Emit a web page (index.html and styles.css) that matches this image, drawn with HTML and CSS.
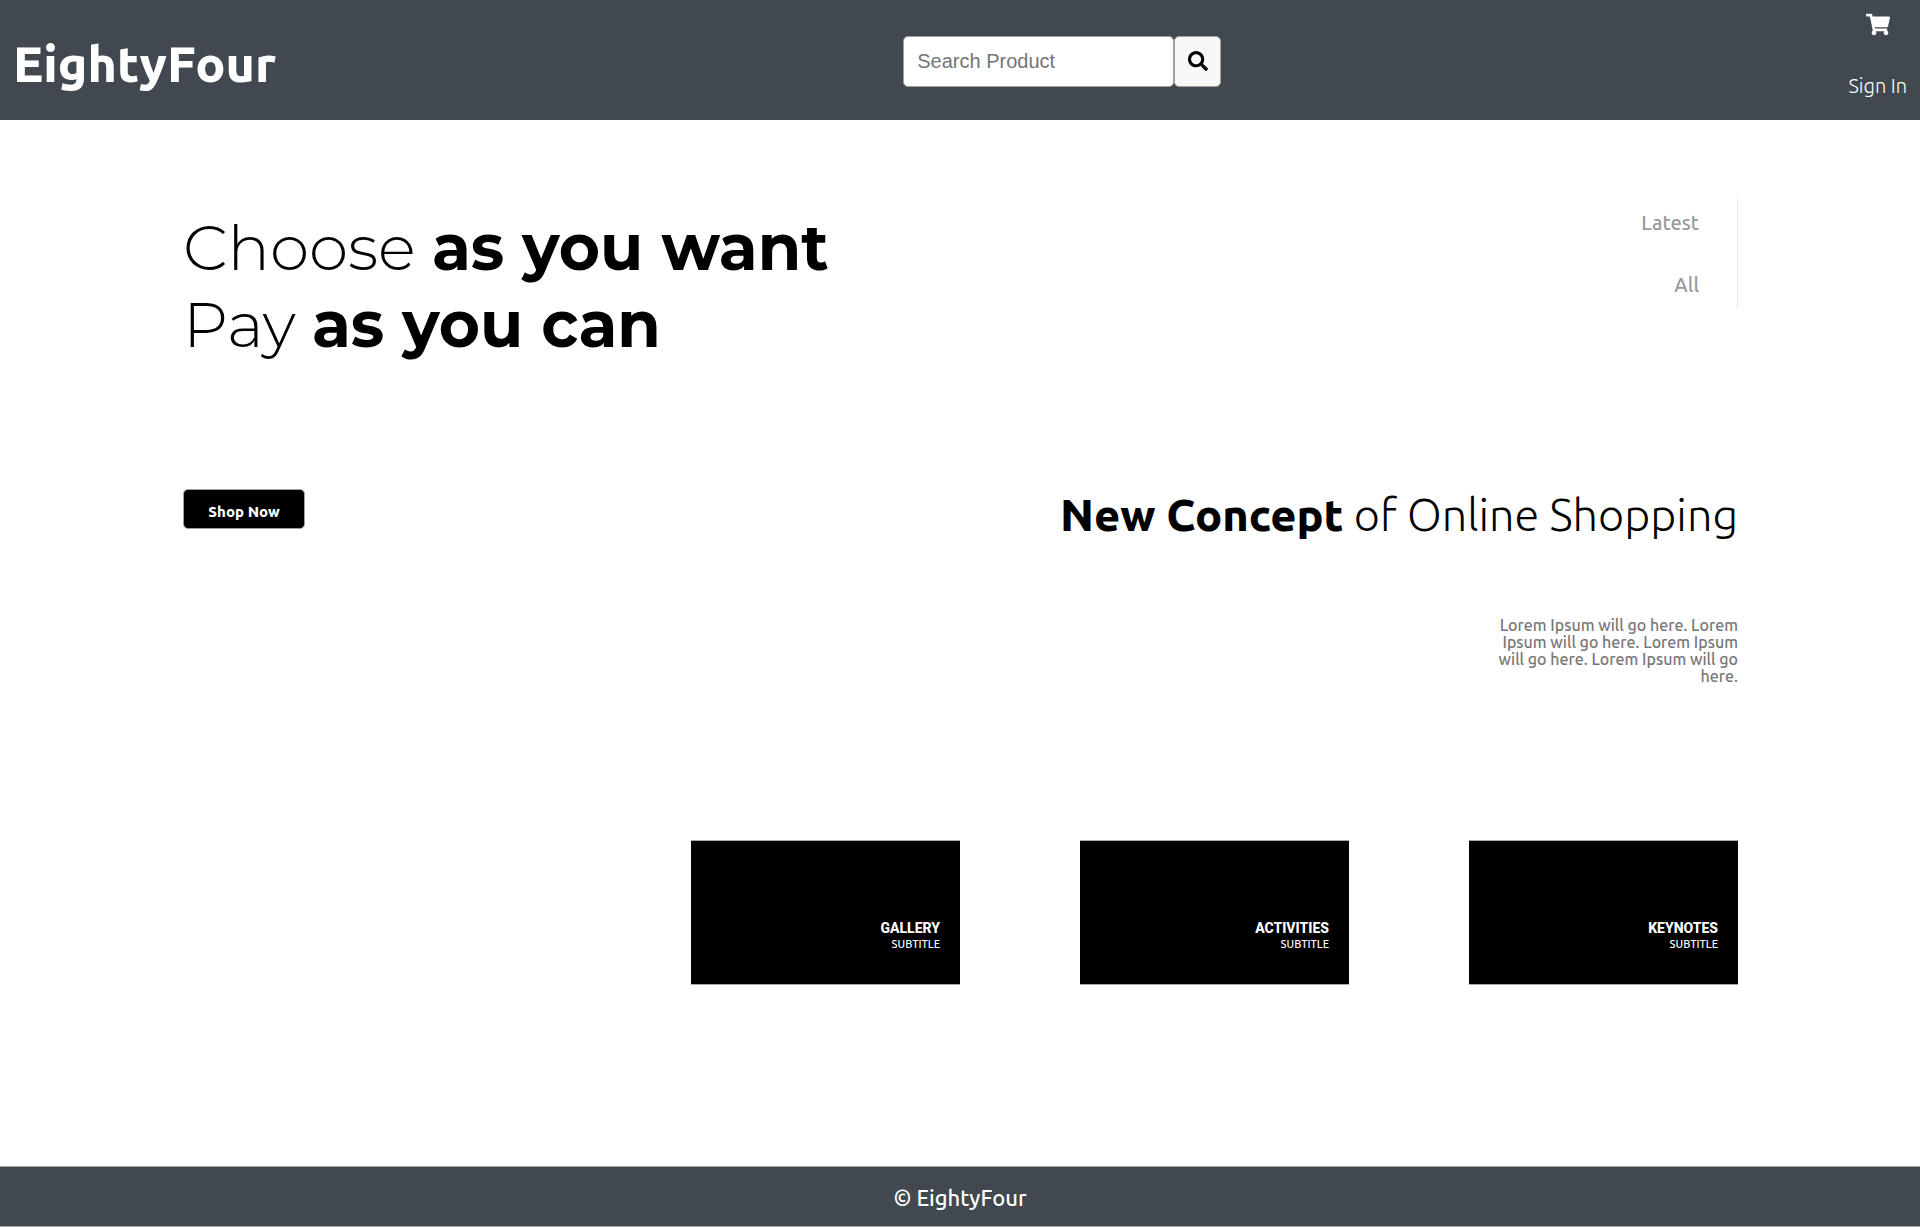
FILE: index.html
```html
<!DOCTYPE html>
<html lang="en">
<head>
<meta charset="utf-8">
<meta name="viewport" content="width=device-width, initial-scale=1">
<title>EightyFour</title>
<link rel="stylesheet" href="styles.css">
</head>
<body>
<header class="header">
  <h1 class="logo">EightyFour</h1>
  <form class="search" role="search">
    <input class="search-input" type="text" placeholder="Search Product" aria-label="Search Product">
    <button class="search-button" type="submit" aria-label="Search">
      <svg class="icon" viewBox="0 0 512 512" aria-hidden="true"><path fill="currentColor" d="M505 442.700L405.300 343c-4.500-4.500-10.600-7-17-7H372c27.600-35.300 44-79.700 44-128C416 93.100 322.900 0 208 0S0 93.100 0 208s93.100 208 208 208c48.300 0 92.700-16.400 128-44v16.300c0 6.400 2.500 12.500 7 17l99.700 99.700c9.400 9.400 24.600 9.400 33.900 0l28.300-28.300c9.400-9.400 9.400-24.600.1-34zM208 336c-70.700 0-128-57.200-128-128 0-70.700 57.200-128 128-128 70.700 0 128 57.200 128 128 0 70.700-57.200 128-128 128z"/></svg>
    </button>
  </form>
  <nav class="account">
    <a class="account-link" href="#" aria-label="Cart">
      <svg class="cart" viewBox="0 0 576 512" aria-hidden="true"><path fill="currentColor" d="M528.120 301.319l47.273-208C578.806 78.301 567.391 64 551.990 64H159.208l-9.166-44.810C147.758 8.021 137.930 0 126.529 0H24C10.745 0 0 10.745 0 24v16c0 13.255 10.745 24 24 24h69.883l70.248 343.435C147.325 417.100 136 435.222 136 456c0 30.928 25.072 56 56 56s56-25.072 56-56c0-15.674-6.447-29.835-16.824-40h209.647C430.447 426.165 424 440.326 424 456c0 30.928 25.072 56 56 56s56-25.072 56-56c0-22.172-12.888-41.332-31.579-50.405l5.517-24.276c3.413-15.018-8.002-29.319-23.403-29.319H218.117l-6.545-32h293.145c11.206 0 20.920-7.754 23.403-18.681z"/></svg>
    </a>
    <a class="account-link" href="#">Sign In</a>
  </nav>
</header>
<main class="main">
  <section class="hero">
    <h2 class="headline">Choose <strong>as you want</strong><br>Pay <strong>as you can</strong></h2>
    <nav class="filters">
      <a class="filter" href="#">Latest</a>
      <a class="filter" href="#">All</a>
    </nav>
  </section>
  <section class="concept">
    <button class="shop" type="button">Shop Now</button>
    <div class="concept-text">
      <h2 class="concept-title"><strong>New Concept</strong> of Online Shopping</h2>
      <p class="lorem">Lorem Ipsum will go here. Lorem Ipsum will go here. Lorem Ipsum will go here. Lorem Ipsum will go here.</p>
    </div>
  </section>
  <section class="cards">
    <article class="card"><h3 class="card-title">GALLERY</h3><p class="card-subtitle">SUBTITLE</p></article>
    <article class="card"><h3 class="card-title">ACTIVITIES</h3><p class="card-subtitle">SUBTITLE</p></article>
    <article class="card"><h3 class="card-title">KEYNOTES</h3><p class="card-subtitle">SUBTITLE</p></article>
  </section>
</main>
<footer class="footer">© EightyFour</footer>
</body>
</html>
```
FILE: styles.css
```css
* { box-sizing: border-box; }
body {
  margin: 0;
  min-height: 100vh;
  display: flex;
  flex-direction: column;
  background: #fff;
  color: #000;
  font-family: Ubuntu, "Noto Sans", sans-serif;
}
h1, h2, h3, p { margin: 0; }
a { text-decoration: none; }

.header {
  display: flex;
  justify-content: space-between;
  align-items: flex-start;
  height: 120px;
  padding: 0 13px;
  background: #41484f;
  color: #fff;
}
.logo { font-size: 50px; line-height: 126px; font-weight: 800; }
.search { display: flex; margin-top: 36px; }
.search-input {
  width: 271px;
  height: 51px;
  padding: 0 13px;
  border: 1px solid #a0a0a0;
  border-radius: 5px;
  font: 20px "Liberation Sans", Arial, sans-serif;
}
.search-input::placeholder { color: #757575; }
.search-button {
  display: grid;
  place-items: center;
  width: 47px;
  height: 51px;
  padding: 0 0 2px;
  border: 1px solid #a0a0a0;
  border-radius: 5px;
  background: #f8f8f8;
  color: #000;
}
.icon { width: 20px; height: 20px; }
.account {
  display: flex;
  flex-direction: column;
  align-items: center;
  gap: 37px;
  padding-top: 12px;
}
.account-link {
  display: flex;
  color: #fff;
  font-size: 20px;
  font-weight: 300;
  line-height: 24px;
}
.cart { width: 24px; height: 25px; }

.main { flex: 1; padding: 78px 182px 0 183px; }
.hero {
  display: flex;
  justify-content: space-between;
  align-items: flex-start;
  height: 291px;
}
.headline {
  padding-top: 11px;
  font-family: Montserrat, Inter, sans-serif;
  font-size: 63px;
  font-weight: 300;
  line-height: 77px;
}
.headline strong { font-weight: 700; }
.filters {
  display: flex;
  flex-direction: column;
  align-items: flex-end;
  gap: 38px;
  padding: 13px 38px 12px 0;
  border-right: 1px solid #e2ebed;
}
.filter { color: #999; font-size: 20px; font-weight: 500; line-height: 24px; }

.concept {
  display: flex;
  justify-content: space-between;
  align-items: flex-start;
  height: 351px;
}
.shop {
  width: 122px;
  height: 40px;
  padding: 4px 0 0;
  border: 1px solid #a0a0a0;
  border-radius: 5px;
  background: #000;
  color: #fff;
  font: 800 15px Ubuntu, "Noto Sans", sans-serif;
}
.concept-text {
  display: flex;
  flex-direction: column;
  align-items: flex-end;
  gap: 76px;
  text-align: right;
}
.concept-title { font-size: 45px; font-weight: 300; line-height: 52px; }
.concept-title strong { font-weight: 800; }
.lorem {
  width: 250px;
  color: #777;
  font-size: 16px;
  font-weight: 500;
  line-height: 17px;
}

.cards { display: flex; justify-content: flex-end; gap: 120px; }
.card {
  width: 269px;
  height: 145px;
  padding: 79px 20px 0 0;
  border: solid #aaa;
  border-width: 1px 0;
  background: #000;
  color: #fff;
  font-family: Roboto, sans-serif;
  text-align: right;
}
.card-title { font-size: 14px; font-weight: 800; line-height: 16px; }
.card-subtitle { font-family: Ubuntu, "Noto Sans", sans-serif; font-size: 11px; font-weight: 500; line-height: 16px; }

.footer {
  height: 61px;
  border: solid #a5a8ab;
  border-width: 1px 0;
  background: #41484f;
  color: #fff;
  font-size: 22px;
  font-weight: 500;
  line-height: 62px;
  text-align: center;
}
```
